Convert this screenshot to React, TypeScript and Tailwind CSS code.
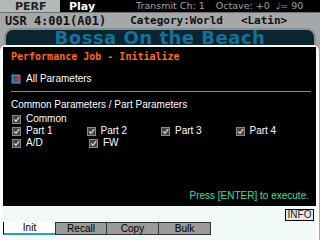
import React from 'react'

const mono = { fontFamily: '"DejaVu Sans Mono", monospace' }
const dejavu = { fontFamily: '"DejaVu Sans", sans-serif' }
const lib = { fontFamily: '"Liberation Sans", Arial, sans-serif' }

function Check({ active = false }: { active?: boolean }) {
  if (active) {
    return (
      <svg width="10" height="10" viewBox="0 0 10 10" className="shrink-0">
        <rect x="0.5" y="0.5" width="9" height="9" fill="#00a8e8" />
        <rect x="2" y="2" width="6" height="6" fill="#555" />
        <path d="M2.5 5 L4.5 7 L8.5 2" stroke="#ff2020" strokeWidth="1.6" fill="none" />
      </svg>
    )
  }
  return (
    <svg width="9" height="9" viewBox="0 0 9 9" className="shrink-0">
      <rect x="0.5" y="0.5" width="8" height="8" fill="#444" stroke="#8a8a8a" />
      <path d="M2.2 4.5 L4 6.3 L7.2 2.2" stroke="#d8d8d8" strokeWidth="1.3" fill="none" />
    </svg>
  )
}

function Item({ label }: { label: string }) {
  return (
    <div className="flex items-center gap-[5px] w-[77px] h-[12px]">
      <Check />
      <span className="text-[10px] text-white leading-none">{label}</span>
    </div>
  )
}

export default function App() {
  return (
    <div className="w-[320px] h-[240px] overflow-hidden bg-[#a4a8a8] flex flex-col" style={lib}>
      {/* top status bar */}
      <div className="shrink-0 h-[12px] flex items-center bg-black whitespace-nowrap" style={dejavu}>
        <div className="w-[60px] h-full bg-[#b4b8b8] flex items-center pl-[15px] text-[11px] font-bold text-[#222] leading-none">PERF</div>
        <span className="ml-[9px] text-[11px] font-bold text-white leading-none">Play</span>
        <span className="ml-[41px] text-[9.5px] text-[#a0a0a0] leading-none">Transmit Ch: 1</span>
        <span className="ml-[11px] text-[9.5px] text-[#a0a0a0] leading-none">Octave: +0</span>
        <span className="ml-[6px] text-[9.5px] text-[#a0a0a0] leading-none">♩= 90</span>
      </div>
      <div className="shrink-0 h-[16px] flex items-center border-t border-[#707070] bg-[#a4a8a8] text-[#111] font-bold leading-none">
        <span className="ml-[5px] text-[12px]" style={mono}>USR 4:001(A01)</span>
        <span className="ml-[24px] text-[11px]" style={mono}>Category:World</span>
        <span className="ml-[18px] text-[11px]" style={mono}>&lt;Latin&gt;</span>
      </div>
      {/* performance name */}
      <div className="shrink-0 px-[4px]">
        <div className="h-[17px] rounded-t-[9px] border-[2px] border-b-0 border-[#8a9090] bg-[#0a2430] flex justify-center pt-[1px]" style={dejavu}>
          <span className="text-[18px] font-bold text-[#17709a] leading-[14px] tracking-[0.5px]">Bossa On the Beach</span>
        </div>
      </div>
      {/* job dialog */}
      <div className="shrink-0 h-[195px] mr-[1px] rounded-t-[6px] bg-[#f2faf8] border-t-[2px] border-l-[3px] border-r-[3px] border-white flex flex-col">
        <div className="shrink-0 h-[159px] bg-black flex flex-col pl-[8px] pr-[6px]">
          <div className="mt-[5px] text-[10px] font-bold text-[#ff6a10] leading-none" style={mono}>Performance Job - Initialize</div>
          <div className="mt-[12px] flex items-center gap-[5px]">
            <Check active />
            <span className="text-[10px] text-white leading-none">All Parameters</span>
          </div>
          <div className="mt-[7px] h-[1px] bg-[#8a8a8a] w-[300px]" />
          <div className="mt-[8px] text-[10px] text-white leading-none">Common Parameters / Part Parameters</div>
          <div className="mt-[3px] flex flex-col pl-[1px]">
            <div className="flex"><Item label="Common" /></div>
            <div className="flex">
              <Item label="Part 1" />
              <Item label="Part 2" />
              <Item label="Part 3" />
              <Item label="Part 4" />
            </div>
            <div className="flex">
              <Item label="A/D" />
              <Item label="FW" />
            </div>
          </div>
          <div className="flex-1" />
          <div className="mb-[5px] self-end pr-[1px] text-[10px] text-[#2ee0a0] leading-none">Press [ENTER] to execute.</div>
        </div>
        <div className="flex justify-end pt-[3px] pr-[2px]">
          <div className="h-[12px] w-[29px] border border-black bg-[#e8e8e8] flex items-center justify-center text-[10px] text-[#222] leading-none">INFO</div>
        </div>
        <div className="mt-[1px] flex h-[13px]">
          <div className="w-[52px] bg-white border-l border-black border-b-[2px] border-b-[#2a9ad8] flex items-center justify-center text-[10px] text-black leading-none">Init</div>
          <div className="w-[52px] bg-[#9a9a9a] border border-[#333] flex items-center justify-center text-[10px] text-black leading-none">Recall</div>
          <div className="w-[52px] bg-[#9a9a9a] border border-[#333] border-l-0 flex items-center justify-center text-[10px] text-black leading-none">Copy</div>
          <div className="w-[52px] bg-[#9a9a9a] border border-[#333] border-l-0 flex items-center justify-center text-[10px] text-black leading-none">Bulk</div>
        </div>
      </div>
    </div>
  )
}
